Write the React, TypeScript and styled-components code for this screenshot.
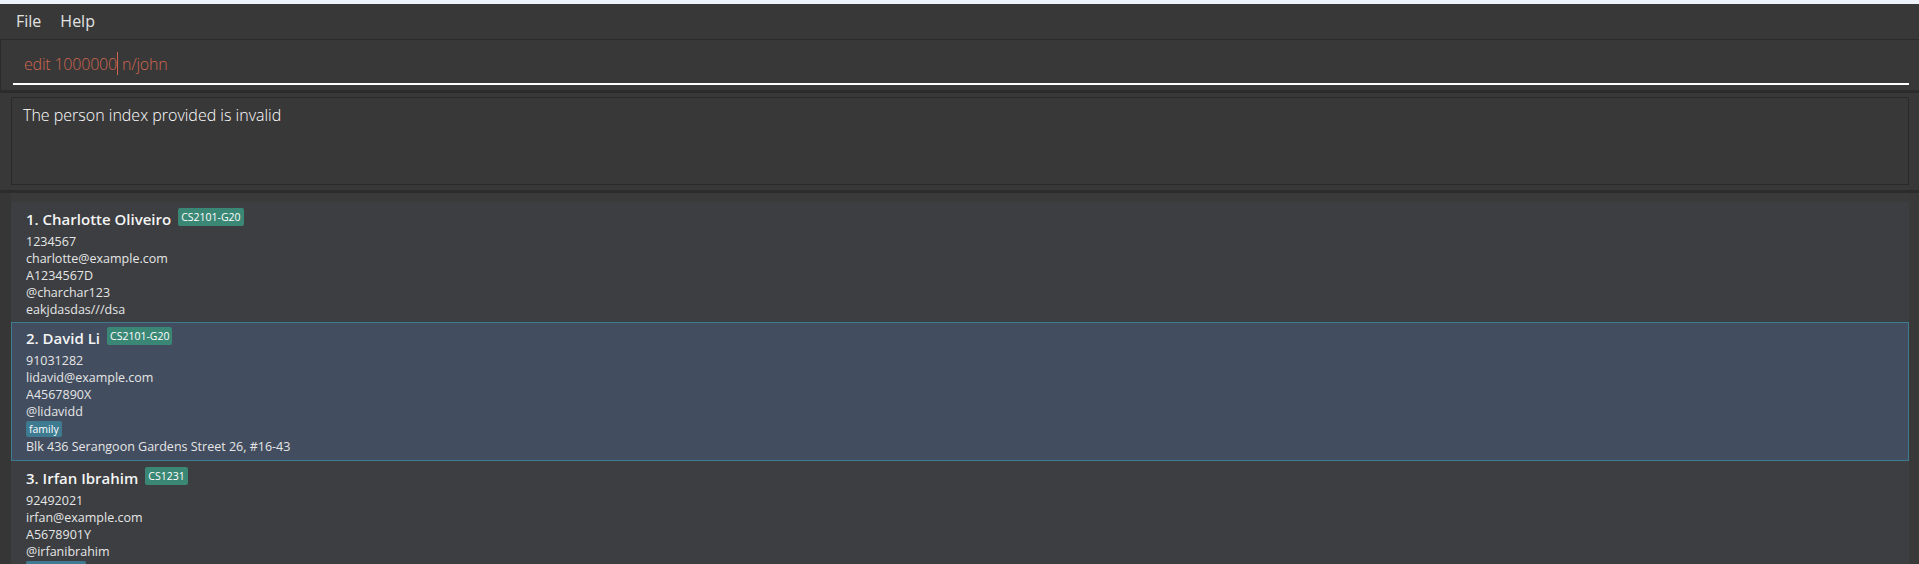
import React from "react";
import styled, { createGlobalStyle } from "styled-components";

const GlobalStyle = createGlobalStyle`
  html, body { margin: 0; padding: 0; background: #383838; overflow: hidden; }
  body { font-family: "Open Sans", "Noto Sans", sans-serif; }
  * { box-sizing: border-box; }
`;

const Window = styled.div`
  width: 1919px;
  height: 564px;
  display: flex;
  flex-direction: column;
  background: #383838;
  overflow: hidden;
`;

const TopStrip = styled.div`
  height: 4px;
  background: #eef3fb;
  flex: none;
`;

const MenuBar = styled.div`
  height: 36px;
  flex: none;
  display: flex;
  align-items: center;
  gap: 19px;
  padding: 0 0 2px 16px;
  background: #383838;
  border-bottom: 1px solid #2b2b2b;
`;

const MenuItem = styled.span`
  font-family: "Open Sans", sans-serif;
  font-size: 16px;
  color: #e2e2e2;
`;

const CommandPane = styled.div`
  height: 50px;
  flex: none;
  padding: 0 10px 0 12px;
  display: flex;
  flex-direction: column;
  justify-content: flex-start;
  border-left: 1px solid #2b2b2b;
`;

const CommandField = styled.div`
  height: 45px;
  padding: 13px 0 0 11px;
  border-bottom: 2px solid #ffffff;
  font-family: "Open Sans", sans-serif;
  font-weight: 300;
  font-size: 16px;
  letter-spacing: -0.2px;
  color: #d06651;
  white-space: pre;
  display: flex;
  align-items: flex-start;
`;

const Caret = styled.span`
  display: inline-block;
  width: 1px;
  height: 23px;
  margin-top: -1px;
  background: #d06651;
`;

const Divider = styled.div`
  height: 3px;
  flex: none;
  background: #2c2c2c;
`;

const ResultPane = styled.div`
  height: 97px;
  flex: none;
  padding: 4px 10px 5px 11px;
  display: flex;
`;

const ResultBox = styled.div`
  flex: 1;
  border: 1px solid #2a2a2a;
  padding: 6px 0 0 11px;
  font-family: "Open Sans", sans-serif;
  font-weight: 300;
  font-size: 16px;
  color: #ffffff;
`;

const ListPane = styled.div`
  flex: 1;
  display: flex;
  background: #383838;
  min-height: 0;
`;

const ListGutter = styled.div`
  width: 11px;
  flex: none;
  background: #363636;
`;

const List = styled.div`
  flex: 1;
  display: flex;
  flex-direction: column;
  padding-top: 9px;
  background: #3a3a3a;
`;

const ScrollStrip = styled.div`
  width: 10px;
  flex: none;
  background: #393939;
`;

const Card = styled.div<{ $selected?: boolean }>`
  display: flex;
  flex-direction: column;
  padding: ${(p) => (p.$selected ? "4px 10px 5px 14px" : "6px 10px 4px 15px")};
  background: ${(p) => (p.$selected ? "#424d5f" : "#3c3e41")};
  border: ${(p) => (p.$selected ? "1px solid #3e7b91" : "none")};
  flex: none;
`;

const NameRow = styled.div`
  height: 25px;
  display: flex;
  align-items: flex-start;
  gap: 7px;
`;

const Name = styled.span`
  font-family: "Open Sans", sans-serif;
  font-weight: 600;
  font-size: 15px;
  line-height: 22px;
  color: #f4f4f4;
`;

const ModuleTag = styled.span`
  height: 18px;
  padding: 0 3px;
  border-radius: 2px;
  background: #3a8775;
  color: #ffffff;
  font-family: "Open Sans", sans-serif;
  font-size: 10.5px;
  line-height: 18px;
`;

const Line = styled.div`
  height: 17px;
  font-family: "Open Sans", sans-serif;
  font-size: 12.5px;
  line-height: 17px;
  color: #e6e6e6;
  white-space: pre;
`;

const TagRow = styled.div`
  height: 18px;
  display: flex;
  align-items: flex-start;
  padding-top: 1px;
`;

const Tag = styled.span`
  height: 16px;
  padding: 0 3px;
  border-radius: 2px;
  background: #3e7b91;
  color: #ffffff;
  font-family: "Open Sans", sans-serif;
  font-size: 10.5px;
  line-height: 16px;
`;

type Person = {
  name: string;
  module: string;
  lines: string[];
  tags?: string[];
  address?: string;
  selected?: boolean;
};

const people: Person[] = [
  {
    name: "1. Charlotte Oliveiro",
    module: "CS2101-G20",
    lines: ["1234567", "charlotte@example.com", "A1234567D", "@charchar123"],
    address: "eakjdasdas///dsa",
  },
  {
    name: "2. David Li",
    module: "CS2101-G20",
    lines: ["91031282", "lidavid@example.com", "A4567890X", "@lidavidd"],
    tags: ["family"],
    address: "Blk 436 Serangoon Gardens Street 26, #16-43",
    selected: true,
  },
  {
    name: "3. Irfan Ibrahim",
    module: "CS1231",
    lines: ["92492021", "irfan@example.com", "A5678901Y", "@irfanibrahim"],
    tags: ["classmates"],
    address: "Blk 030 Geylang Street 29, #06-40",
  },
];

export default function App() {
  return (
    <Window>
      <GlobalStyle />
      <TopStrip />
      <MenuBar>
        <MenuItem>File</MenuItem>
        <MenuItem>Help</MenuItem>
      </MenuBar>
      <CommandPane>
        <CommandField>
          edit 1000000<Caret /> n/john
        </CommandField>
      </CommandPane>
      <Divider />
      <ResultPane>
        <ResultBox>The person index provided is invalid</ResultBox>
      </ResultPane>
      <Divider />
      <ListPane>
        <ListGutter />
        <List>
          {people.map((p) => (
            <Card key={p.name} $selected={p.selected}>
              <NameRow>
                <Name>{p.name}</Name>
                <ModuleTag>{p.module}</ModuleTag>
              </NameRow>
              {p.lines.map((l) => (
                <Line key={l}>{l}</Line>
              ))}
              {p.tags && (
                <TagRow>
                  {p.tags.map((t) => (
                    <Tag key={t}>{t}</Tag>
                  ))}
                </TagRow>
              )}
              {p.address && <Line>{p.address}</Line>}
            </Card>
          ))}
        </List>
        <ScrollStrip />
      </ListPane>
    </Window>
  );
}
